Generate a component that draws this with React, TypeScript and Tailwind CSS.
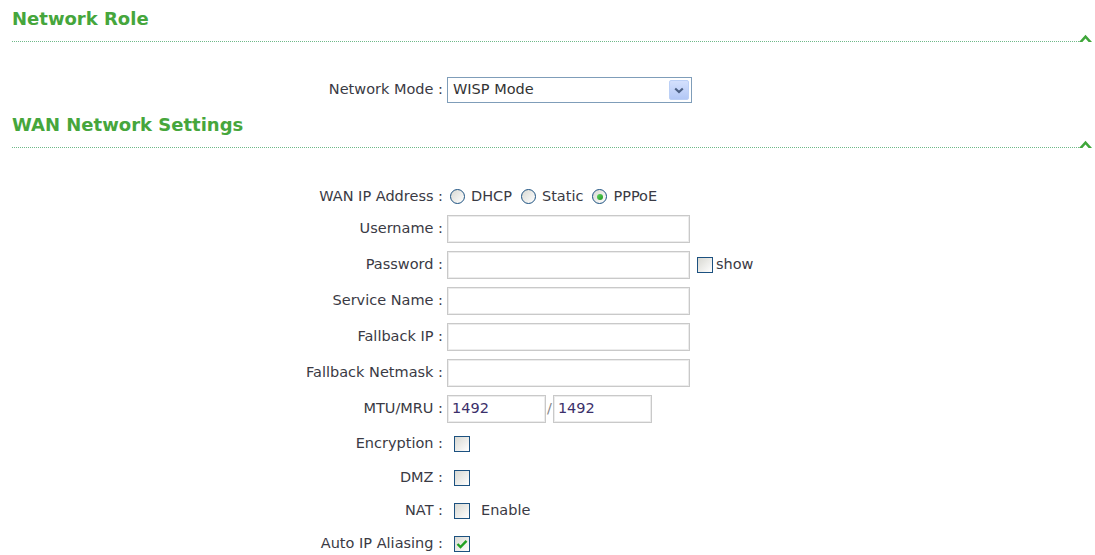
import React from "react";

// Small filled "collapse" chevron that sits at the right end of a section rule
function CollapseArrow() {
  return (
    <svg width="13" height="8" viewBox="0 0 13 8" className="shrink-0 block">
      <path d="M0 8 L6.5 0.8 L13 8 L9.6 8 L6.5 4.6 L3.4 8 Z" fill="#3fa63a" />
    </svg>
  );
}

function SectionHeader({ title, className }: { title: string; className: string }) {
  return (
    <div className={className}>
      <div className="h-[24px] leading-[24px] text-[18px] font-bold text-[#46a63c] whitespace-nowrap">
        {title}
      </div>
      <div className="mt-[2px] flex items-end h-[9px]">
        <div className="flex-1 h-full border-b border-dotted border-[#6fb98a]" />
        <CollapseArrow />
      </div>
    </div>
  );
}

function Row({
  label,
  height,
  children,
}: {
  label: string;
  height: string;
  children?: React.ReactNode;
}) {
  return (
    <div className={`flex items-center ${height}`}>
      <div className="w-[431px] shrink-0 text-right whitespace-nowrap">{label} :</div>
      <div className="ml-[4px] flex items-center">{children}</div>
    </div>
  );
}

function TextInput({ width, value }: { width: string; value?: string }) {
  return (
    <div
      className={`${width} h-[28px] border border-[#c9c9c9] shadow-[inset_0_0_0_1px_#ececec] bg-white flex items-center pl-[4px] text-[#3b2f6a]`}
    >
      {value}
    </div>
  );
}

function Radio({ checked }: { checked?: boolean }) {
  return (
    <div className="w-[15px] h-[15px] rounded-full border border-[#1c5180] bg-gradient-to-br from-[#d9d9d3] to-white flex items-center justify-center shrink-0">
      {checked && (
        <div className="w-[6px] h-[6px] rounded-full bg-gradient-to-br from-[#5ed65e] to-[#1d9a1d]" />
      )}
    </div>
  );
}

function Check({ checked }: { checked?: boolean }) {
  return (
    <div className="w-[16px] h-[16px] border border-[#1c5180] bg-gradient-to-br from-[#d8d8d2] to-white flex items-center justify-center shrink-0">
      {checked && (
        <svg width="12" height="10" viewBox="0 0 12 10">
          <path d="M1.5 5 L4.5 8 L10.5 1.8" fill="none" stroke="#21a121" strokeWidth="2.4" />
        </svg>
      )}
    </div>
  );
}

function Select({ value }: { value: string }) {
  return (
    <div className="w-[245px] h-[26px] border border-[#7f9db9] bg-white flex items-center pl-[5px] pr-[2px] text-[#333]">
      <span className="flex-1">{value}</span>
      <div className="w-[20px] h-[20px] rounded-[2px] border border-[#bcd0f6] bg-gradient-to-b from-[#d4e0fd] to-[#b3c8f6] flex items-center justify-center">
        <svg width="10" height="7" viewBox="0 0 10 7">
          <path d="M1.2 1.5 L5 5 L8.8 1.5" fill="none" stroke="#4d6185" strokeWidth="2.2" />
        </svg>
      </div>
    </div>
  );
}

export default function App() {
  return (
    <div className="w-[1095px] h-[555px] overflow-hidden bg-white pl-3 pr-[3px] font-['DejaVu_Sans',Verdana,sans-serif] text-[14.5px] text-[#3a3a44]">
      <SectionHeader title="Network Role" className="pt-[7px]" />

      <div className="mt-[34px]">
        <Row label="Network Mode" height="h-[28px]">
          <Select value="WISP Mode" />
        </Row>
      </div>

      <SectionHeader title="WAN Network Settings" className="mt-[9px]" />

      <div className="mt-[34px] flex flex-col">
        <Row label="WAN IP Address" height="h-[29px]">
          <div className="ml-[3px] flex items-center gap-[9px]">
            <div className="flex items-center gap-[6px]">
              <Radio />
              <span>DHCP</span>
            </div>
            <div className="flex items-center gap-[6px]">
              <Radio />
              <span>Static</span>
            </div>
            <div className="flex items-center gap-[6px]">
              <Radio checked />
              <span>PPPoE</span>
            </div>
          </div>
        </Row>
        <Row label="Username" height="h-[36px]">
          <TextInput width="w-[243px]" />
        </Row>
        <Row label="Password" height="h-[36px]">
          <TextInput width="w-[243px]" />
          <div className="ml-[7px] flex items-center gap-[3px]">
            <Check />
            <span>show</span>
          </div>
        </Row>
        <Row label="Service Name" height="h-[36px]">
          <TextInput width="w-[243px]" />
        </Row>
        <Row label="Fallback IP" height="h-[36px]">
          <TextInput width="w-[243px]" />
        </Row>
        <Row label="Fallback Netmask" height="h-[36px]">
          <TextInput width="w-[243px]" />
        </Row>
        <Row label="MTU/MRU" height="h-[36px]">
          <TextInput width="w-[99px]" value="1492" />
          <span className="px-[1px] text-[#888]">/</span>
          <TextInput width="w-[99px]" value="1492" />
        </Row>
        <Row label="Encryption" height="h-[34px]">
          <div className="ml-[7px]">
            <Check />
          </div>
        </Row>
        <Row label="DMZ" height="h-[33px]">
          <div className="ml-[7px]">
            <Check />
          </div>
        </Row>
        <Row label="NAT" height="h-[33px]">
          <div className="ml-[7px] flex items-center gap-[11px]">
            <Check />
            <span>Enable</span>
          </div>
        </Row>
        <Row label="Auto IP Aliasing" height="h-[33px]">
          <div className="ml-[7px]">
            <Check checked />
          </div>
        </Row>
      </div>
    </div>
  );
}
